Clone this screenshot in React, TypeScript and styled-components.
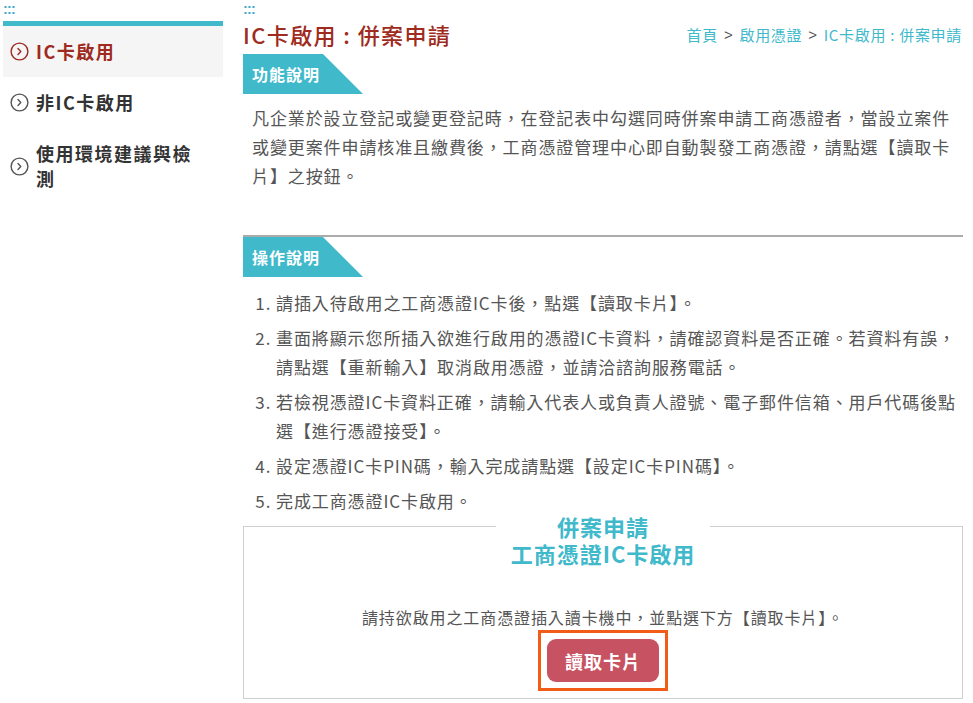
import type { FC } from 'react'
import styled, { createGlobalStyle, css } from 'styled-components'

const CYAN = '#40b9cb'
const RED = '#9e2a20'
const TEXT = '#555'

const GlobalStyle = createGlobalStyle`
  html, body {
    margin: 0;
    padding: 0;
    background: #fff;
  }
  body {
    font-family: 'Noto Sans CJK TC', 'Noto Sans', sans-serif;
    color: ${TEXT};
  }
`

const menuItems = [
  { id: 'ic', label: 'IC卡啟用', active: true },
  { id: 'nonic', label: '非IC卡啟用', active: false },
  { id: 'env', label: '使用環境建議與檢測', active: false }
]

const steps = [
  '請插入待啟用之工商憑證IC卡後，點選【讀取卡片】。',
  '畫面將顯示您所插入欲進行啟用的憑證IC卡資料，請確認資料是否正確。若資料有誤，請點選【重新輸入】取消啟用憑證，並請洽諮詢服務電話。',
  '若檢視憑證IC卡資料正確，請輸入代表人或負責人證號、電子郵件信箱、用戶代碼後點選【進行憑證接受】。',
  '設定憑證IC卡PIN碼，輸入完成請點選【設定IC卡PIN碼】。',
  '完成工商憑證IC卡啟用。'
]

const CircleArrow: FC<{ color: string }> = ({ color }) => (
  <svg width="19" height="19" viewBox="0 0 19 19" fill="none">
    <circle cx="9.5" cy="9.5" r="8.4" stroke={color} strokeWidth="1.4" />
    <path d="M8 6.6 L10.8 9.5 L8 12.4" stroke={color} strokeWidth="1.4" strokeLinecap="round" strokeLinejoin="round" />
  </svg>
)

const App: FC = () => {
  return (
    <>
      <GlobalStyle />
      <Page>
        <Sidebar>
          <AccessKey>:::</AccessKey>
          <Menu>
            {menuItems.map((item) => (
              <MenuItem key={item.id} active={item.active}>
                <CircleArrow color={item.active ? RED : '#555'} />
                <MenuLabel>{item.label}</MenuLabel>
              </MenuItem>
            ))}
          </Menu>
        </Sidebar>

        <Main>
          <AccessKey>:::</AccessKey>
          <Header>
            <Title>IC卡啟用 : 併案申請</Title>
            <Breadcrumb>
              <Crumb>首頁</Crumb>
              <Sep>&gt;</Sep>
              <Crumb>啟用憑證</Crumb>
              <Sep>&gt;</Sep>
              <Crumb>IC卡啟用 : 併案申請</Crumb>
            </Breadcrumb>
          </Header>

          <SectionTag first>功能說明</SectionTag>
          <Paragraph>
            凡企業於設立登記或變更登記時，在登記表中勾選同時併案申請工商憑證者，當設立案件或變更案件申請核准且繳費後，工商憑證管理中心即自動製發工商憑證，請點選【讀取卡片】之按鈕。
          </Paragraph>

          <Divider />

          <SectionTag>操作說明</SectionTag>
          <Steps>
            {steps.map((step, i) => (
              <Step key={i}>{step}</Step>
            ))}
          </Steps>

          <CardBox>
            <Legend>併案申請</Legend>
            <BoxTitle>工商憑證IC卡啟用</BoxTitle>
            <Message>請持欲啟用之工商憑證插入讀卡機中，並點選下方【讀取卡片】。</Message>
            <ButtonFrame>
              <ReadButton type="button">讀取卡片</ReadButton>
            </ButtonFrame>
          </CardBox>
        </Main>
      </Page>
    </>
  )
}

const Page = styled.div`
  display: flex;
  gap: 20px;
  padding: 0 10px 4px 3px;
`

const Sidebar = styled.aside`
  width: 220px;
  flex-shrink: 0;
`

const AccessKey = styled.div`
  font-family: 'Liberation Sans', Arial, sans-serif;
  font-size: 14px;
  font-weight: 700;
  line-height: 18px;
  height: 18px;
  letter-spacing: -0.7px;
  color: #3fa9d4;
`

const Menu = styled.ul`
  list-style: none;
  margin: 3px 0 0;
  padding: 0;
  border-top: 5px solid ${CYAN};
`

const MenuItem = styled.li<{ active?: boolean }>`
  display: flex;
  align-items: center;
  gap: 7px;
  padding: 13px 20px 13px 7px;
  color: #333;
  ${(props) =>
    props.active &&
    css`
      background: #f5f5f5;
      color: ${RED};
    `}
  svg {
    flex-shrink: 0;
  }
`

const MenuLabel = styled.span`
  font-size: 18px;
  font-weight: 700;
  line-height: 25px;
  letter-spacing: 1.5px;
`

const Main = styled.main`
  flex: 1;
  min-width: 0;
`

const Header = styled.div`
  display: flex;
  align-items: center;
  justify-content: space-between;
  height: 32px;
`

const Title = styled.h1`
  margin: 0;
  font-size: 22px;
  font-weight: 500;
  letter-spacing: 1.4px;
  color: ${RED};
  line-height: 32px;
`

const Breadcrumb = styled.nav`
  display: flex;
  align-items: center;
  font-size: 15px;
  letter-spacing: 0.7px;
  padding-right: 1px;
`

const Crumb = styled.span`
  color: ${CYAN};
`

const Sep = styled.span`
  color: #555;
  margin: 0 6px;
  font-family: 'Liberation Sans', Arial, sans-serif;
`

const SectionTag = styled.div<{ first?: boolean }>`
  width: 120px;
  height: 40px;
  margin-top: ${(props) => (props.first ? '4px' : '0')};
  padding-left: 9px;
  box-sizing: border-box;
  background: ${CYAN};
  clip-path: polygon(0 0, 80px 0, 100% 100%, 0 100%);
  color: #fff;
  font-size: 16px;
  font-weight: 700;
  letter-spacing: 1px;
  line-height: 40px;
`

const Paragraph = styled.p`
  margin: 9px 0 0;
  padding-left: 9px;
  font-size: 17px;
  line-height: 29px;
  letter-spacing: 0.9px;
  color: ${TEXT};
`

const Divider = styled.hr`
  margin: 45px 0 0;
  border: none;
  border-top: 2px solid #ababab;
  height: 0;
`

const Steps = styled.ol`
  margin: 11px 0 0;
  padding-left: 33px;
  font-size: 17px;
  line-height: 29px;
  letter-spacing: 0.9px;
  color: ${TEXT};
`

const Step = styled.li`
  margin-bottom: 6px;
  &:last-child {
    margin-bottom: 0;
  }
`

const CardBox = styled.fieldset`
  box-sizing: border-box;
  width: 100%;
  margin: -3px 0 0;
  padding: 0 0 7px;
  border: 1px solid #cfcfcf;
  text-align: center;
`

const Legend = styled.legend`
  margin: 0 auto;
  padding: 0 61px;
  font-size: 22px;
  font-weight: 700;
  letter-spacing: 1px;
  line-height: 28px;
  color: ${CYAN};
`

const BoxTitle = styled.h2`
  margin: 0;
  font-size: 22px;
  font-weight: 700;
  letter-spacing: 1px;
  line-height: 26px;
  color: ${CYAN};
`

const Message = styled.p`
  margin: 38px 0 0;
  font-size: 16px;
  line-height: 26px;
  letter-spacing: 0.9px;
  color: ${TEXT};
`

const ButtonFrame = styled.div`
  display: flex;
  width: fit-content;
  margin: 0 auto;
  padding: 6px;
  border: 3px solid #f25c19;
`

const ReadButton = styled.button`
  width: 112px;
  height: 43px;
  border: none;
  border-radius: 9px;
  background: #c75362;
  color: #fff;
  font-family: inherit;
  font-size: 18px;
  font-weight: 700;
  letter-spacing: 1px;
  cursor: pointer;
`

export default App
